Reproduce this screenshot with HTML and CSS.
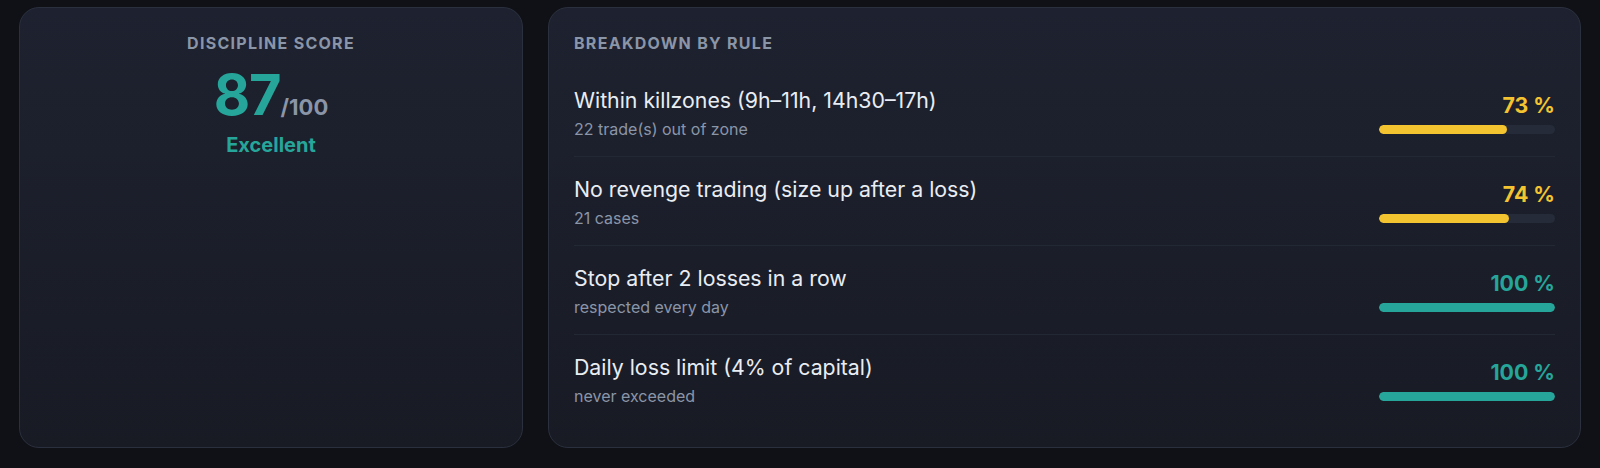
FILE: index.html
```html
<!doctype html>
<html lang="en">

<head>
  <meta charset="UTF-8">
  <meta name="viewport" content="width=device-width, initial-scale=1.0">
  <title>Discipline</title>
  <link rel="stylesheet" href="styles.css">
</head>

<body>
  <main class="discipline">
    <section class="card score-card">
      <h2 class="card-title">Discipline score</h2>
      <div class="score">
        <span class="score-value">87</span><span class="score-max">/100</span>
      </div>
      <div class="score-label">Excellent</div>
    </section>

    <section class="card rules-card">
      <h2 class="card-title">Breakdown by rule</h2>

      <div class="rule">
        <div class="rule-info">
          <div class="rule-name">Within killzones (9h–11h, 14h30–17h)</div>
          <div class="rule-note">22 trade(s) out of zone</div>
        </div>
        <div class="rule-stat warn">
          <div class="rule-pct">73 %</div>
          <div class="bar"><div class="bar-fill" style="width: 73%"></div></div>
        </div>
      </div>

      <div class="rule">
        <div class="rule-info">
          <div class="rule-name">No revenge trading (size up after a loss)</div>
          <div class="rule-note">21 cases</div>
        </div>
        <div class="rule-stat warn">
          <div class="rule-pct">74 %</div>
          <div class="bar"><div class="bar-fill" style="width: 74%"></div></div>
        </div>
      </div>

      <div class="rule">
        <div class="rule-info">
          <div class="rule-name">Stop after 2 losses in a row</div>
          <div class="rule-note">respected every day</div>
        </div>
        <div class="rule-stat good">
          <div class="rule-pct">100 %</div>
          <div class="bar"><div class="bar-fill" style="width: 100%"></div></div>
        </div>
      </div>

      <div class="rule">
        <div class="rule-info">
          <div class="rule-name">Daily loss limit (4% of capital)</div>
          <div class="rule-note">never exceeded</div>
        </div>
        <div class="rule-stat good">
          <div class="rule-pct">100 %</div>
          <div class="bar"><div class="bar-fill" style="width: 100%"></div></div>
        </div>
      </div>
    </section>
  </main>
</body>

</html>
```

FILE: styles.css
```css
* {
  box-sizing: border-box;
}

body {
  margin: 0;
  background: #0f1117;
  font-family: Inter, "Noto Sans", sans-serif;
  color: #e9edf3;
}

.discipline {
  display: grid;
  grid-template-columns: 504px 1fr;
  gap: 25px;
  padding: 7px 19px 20px;
}

.card {
  background: linear-gradient(180deg, #1e2230 0%, #181b24 100%);
  border: 1px solid #2a303d;
  border-radius: 20px;
  padding: 25px 25px 24px;
}

.card-title {
  margin: 0;
  font-size: 16px;
  line-height: 20px;
  font-weight: 700;
  letter-spacing: 0.08em;
  text-transform: uppercase;
  color: #8b95a8;
}

/* left: overall score */
.score-card {
  text-align: center;
}

.score {
  margin-top: 10px;
  font-size: 56px;
  line-height: 64px;
  font-weight: 700;
}

.score-value {
  letter-spacing: -0.02em;
  color: #26a69a;
}

.score-max {
  font-size: 22px;
  line-height: 1;
  color: #8b95a8;
}

.score-label {
  margin-top: 6px;
  font-size: 20px;
  line-height: 24px;
  font-weight: 700;
  color: #26a69a;
}

/* right: one row per rule */
.rules-card .card-title {
  margin-bottom: 15px;
}

.rule {
  display: flex;
  justify-content: space-between;
  align-items: flex-end;
  padding: 17px 0;
  border-bottom: 1px solid #232835;
}

.rule:last-child {
  border-bottom: none;
}

.rule-name {
  font-size: 21.3px;
  line-height: 30px;
}

.rule-note {
  margin-top: 4px;
  font-size: 16px;
  line-height: 20px;
  color: #8b95a8;
}

.rule-stat {
  width: 176px;
  text-align: right;
  padding-bottom: 5px;
}

.rule-pct {
  font-size: 21.3px;
  font-weight: 700;
  line-height: 26px;
}

.bar {
  height: 9px;
  margin-top: 7px;
  border-radius: 5px;
  background: #252b38;
  overflow: hidden;
}

.bar-fill {
  height: 100%;
  border-radius: 5px;
}

.warn .rule-pct {
  color: #f4c430;
}

.warn .bar-fill {
  background: #f4c430;
}

.good .rule-pct {
  color: #26a69a;
}

.good .bar-fill {
  background: #26a69a;
}
```
